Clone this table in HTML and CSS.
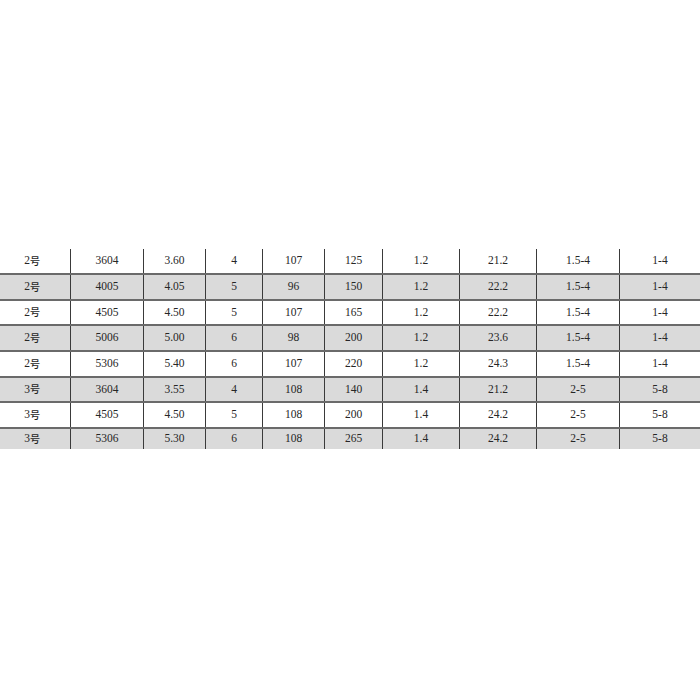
FILE: index.html
```html
<!DOCTYPE html>
<html lang="ja">
<head>
<meta charset="utf-8">
<title>Spec table</title>
<link rel="stylesheet" href="styles.css">
</head>
<body>
<div class="page">
  <div class="table">
    <div class="row">
      <div class="cell"><span class="num">2</span><span class="kanji">号</span></div><div class="cell">3604</div><div class="cell">3.60</div><div class="cell">4</div><div class="cell">107</div><div class="cell">125</div><div class="cell">1.2</div><div class="cell">21.2</div><div class="cell">1.5-4</div><div class="cell">1-4</div>
    </div>
    <div class="row shade">
      <div class="cell"><span class="num">2</span><span class="kanji">号</span></div><div class="cell">4005</div><div class="cell">4.05</div><div class="cell">5</div><div class="cell">96</div><div class="cell">150</div><div class="cell">1.2</div><div class="cell">22.2</div><div class="cell">1.5-4</div><div class="cell">1-4</div>
    </div>
    <div class="row">
      <div class="cell"><span class="num">2</span><span class="kanji">号</span></div><div class="cell">4505</div><div class="cell">4.50</div><div class="cell">5</div><div class="cell">107</div><div class="cell">165</div><div class="cell">1.2</div><div class="cell">22.2</div><div class="cell">1.5-4</div><div class="cell">1-4</div>
    </div>
    <div class="row shade">
      <div class="cell"><span class="num">2</span><span class="kanji">号</span></div><div class="cell">5006</div><div class="cell">5.00</div><div class="cell">6</div><div class="cell">98</div><div class="cell">200</div><div class="cell">1.2</div><div class="cell">23.6</div><div class="cell">1.5-4</div><div class="cell">1-4</div>
    </div>
    <div class="row">
      <div class="cell"><span class="num">2</span><span class="kanji">号</span></div><div class="cell">5306</div><div class="cell">5.40</div><div class="cell">6</div><div class="cell">107</div><div class="cell">220</div><div class="cell">1.2</div><div class="cell">24.3</div><div class="cell">1.5-4</div><div class="cell">1-4</div>
    </div>
    <div class="row shade">
      <div class="cell"><span class="num">3</span><span class="kanji">号</span></div><div class="cell">3604</div><div class="cell">3.55</div><div class="cell">4</div><div class="cell">108</div><div class="cell">140</div><div class="cell">1.4</div><div class="cell">21.2</div><div class="cell">2-5</div><div class="cell">5-8</div>
    </div>
    <div class="row">
      <div class="cell"><span class="num">3</span><span class="kanji">号</span></div><div class="cell">4505</div><div class="cell">4.50</div><div class="cell">5</div><div class="cell">108</div><div class="cell">200</div><div class="cell">1.4</div><div class="cell">24.2</div><div class="cell">2-5</div><div class="cell">5-8</div>
    </div>
    <div class="row shade last">
      <div class="cell"><span class="num">3</span><span class="kanji">号</span></div><div class="cell">5306</div><div class="cell">5.30</div><div class="cell">6</div><div class="cell">108</div><div class="cell">265</div><div class="cell">1.4</div><div class="cell">24.2</div><div class="cell">2-5</div><div class="cell">5-8</div>
    </div>
  </div>
</div>
</body>
</html>
```

FILE: styles.css
```css
html, body {
  margin: 0;
  padding: 0;
  background: #ffffff;
}

.page {
  width: 700px;
  height: 700px;
  padding-top: 249px;
  box-sizing: border-box;
  overflow: hidden;
}

.table {
  display: flex;
  flex-direction: column;
  font-family: "Liberation Serif", serif;
  font-size: 11.5px;
  color: #262626;
}

.row {
  display: grid;
  grid-template-columns: 70px 73px 62px 57px 62px 58px 77px 77px 83px 1fr;
  height: 25.67px;
  box-sizing: border-box;
  border-top: 2px solid #6a6a6a;
  background: #ffffff;
}

.row:first-child {
  border-top: none;
  height: 24px;
}

.row.shade {
  background: #dadada;
}

.row.last {
  height: 22px;
}

.cell {
  display: flex;
  align-items: center;
  justify-content: center;
  line-height: 1;
}

.cell + .cell {
  border-left: 1px solid #3a3a3a;
}

.cell:first-child {
  padding-right: 6px;
}

.num {
  font-family: "Liberation Serif", serif;
}

.kanji {
  font-family: "Noto Sans CJK JP", sans-serif;
  font-size: 10px;
  font-weight: 500;
}
```
